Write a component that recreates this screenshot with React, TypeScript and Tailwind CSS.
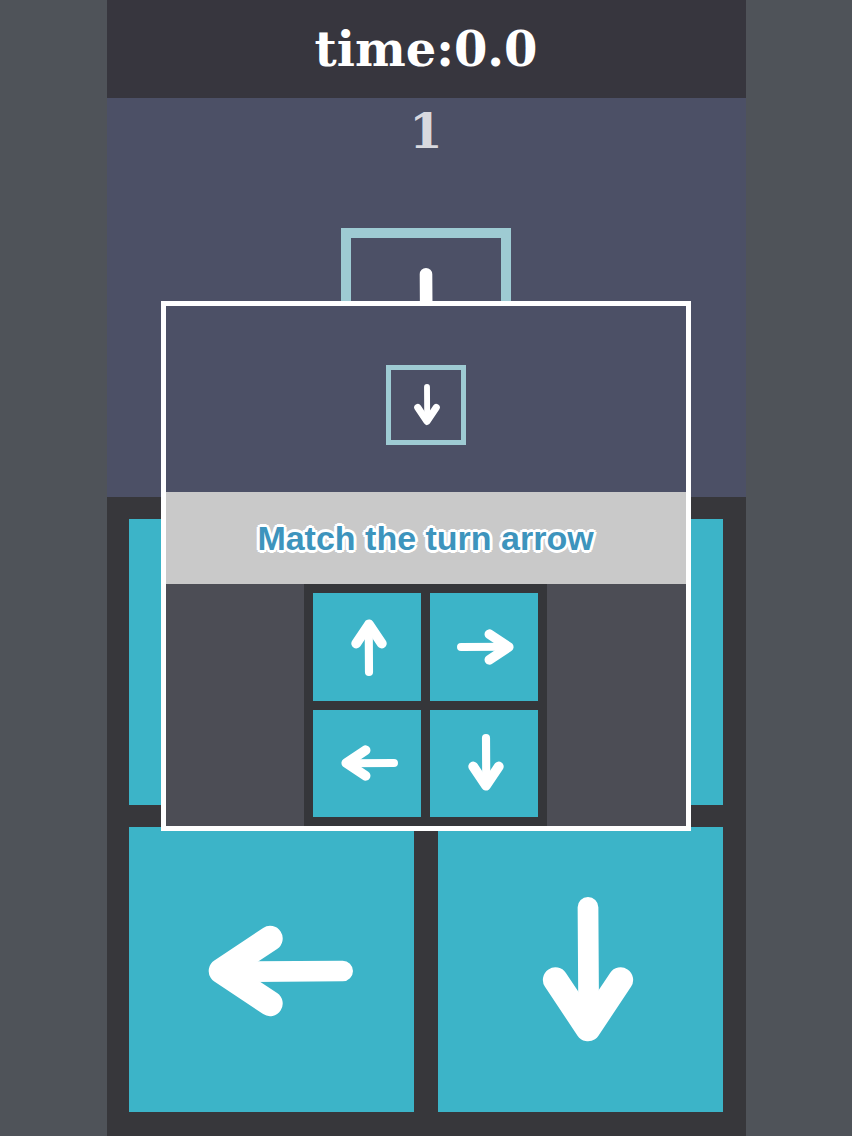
import React from 'react';

type Dir = 'up' | 'down' | 'left' | 'right';

const rotation: Record<Dir, string> = {
    down: '',
    left: 'rotate-90',
    up: 'rotate-180',
    right: '-rotate-90',
};

// hand-drawn style arrow, drawn pointing down, rotated for the other directions
const Arrow: React.FC<{ dir: Dir; size: number; className?: string }> = ({ dir, size, className = '' }) => (
    <svg width={size} height={size} viewBox="0 0 100 100" className={`${rotation[dir]} ${className}`}>
        <g fill="none" stroke="#ffffff" strokeLinecap="round" strokeLinejoin="round">
            <path d="M50 7 L50.5 86" strokeWidth={14} />
            <path d="M28 56 L50 89 L72 56" strokeWidth={17} />
        </g>
    </svg>
);

const BigButton: React.FC<{ dir: Dir }> = ({ dir }) => (
    <div className="bg-[#3cb4c8] flex items-center justify-center">
        <Arrow dir={dir} size={148} className="ml-4 mt-1" />
    </div>
);

const SmallCell: React.FC<{ dir: Dir }> = ({ dir }) => (
    <div className="bg-[#3cb4c8] flex items-center justify-center">
        <Arrow dir={dir} size={58} className="ml-1" />
    </div>
);

export default function App() {
    const slab = { fontFamily: '"DejaVu Serif", "Liberation Serif", serif' };

    return (
        <div className="h-[1136px] bg-[#4f5359] flex justify-center overflow-hidden">
            <div className="relative w-[639px] h-full flex flex-col">
                {/* timer */}
                <div className="h-[98px] bg-[#37363e] flex items-center justify-center">
                    <span className="text-[48px] leading-none font-bold text-white" style={slab}>time:0.0</span>
                </div>

                {/* target area */}
                <div className="h-[399px] bg-[#4c5066] flex flex-col items-center">
                    <div className="mt-[9px] text-[48px] leading-none font-bold text-[#d8d9df]" style={slab}>1</div>
                    <div className="mt-[73px] w-[170px] h-[170px] border-[10px] border-[#9ecbd3] flex items-center justify-center">
                        <Arrow dir="down" size={90} />
                    </div>
                </div>

                {/* answer buttons */}
                <div className="flex-1 bg-[#37373b] grid grid-cols-2 grid-rows-2 gap-x-[24px] gap-y-[22px] pt-[22px] pl-[22px] pr-[23px] pb-[24px]">
                    <BigButton dir="up" />
                    <BigButton dir="right" />
                    <BigButton dir="left" />
                    <BigButton dir="down" />
                </div>

                {/* tutorial overlay */}
                <div className="absolute left-[54px] top-[301px] w-[530px] h-[530px] border-[5px] border-white flex flex-col">
                    <div className="h-[186px] bg-[#4c5066] flex justify-center pt-[59px]">
                        <div className="w-[80px] h-[80px] border-[5px] border-[#9ecbd3] flex items-center justify-center">
                            <Arrow dir="down" size={42} className="ml-[2px]" />
                        </div>
                    </div>
                    <div className="h-[92px] bg-[#c9c9c9] flex items-center justify-center">
                        <span
                            className="text-[34px] font-bold text-[#3d94bd] [text-shadow:3px_0_0_#fff,-3px_0_0_#fff,0_3px_0_#fff,0_-3px_0_#fff,2px_2px_0_#fff,-2px_-2px_0_#fff,2px_-2px_0_#fff,-2px_2px_0_#fff]"
                            style={{ fontFamily: '"Comic Sans MS", "Liberation Sans", Arial, sans-serif' }}
                        >
                            Match the turn arrow
                        </span>
                    </div>
                    <div className="flex-1 bg-[#4c4d55] flex justify-center">
                        <div className="w-[243px] h-full bg-[#35363a] grid grid-cols-2 grid-rows-2 gap-[9px] p-[9px]">
                            <SmallCell dir="up" />
                            <SmallCell dir="right" />
                            <SmallCell dir="left" />
                            <SmallCell dir="down" />
                        </div>
                    </div>
                </div>
            </div>
        </div>
    );
}
